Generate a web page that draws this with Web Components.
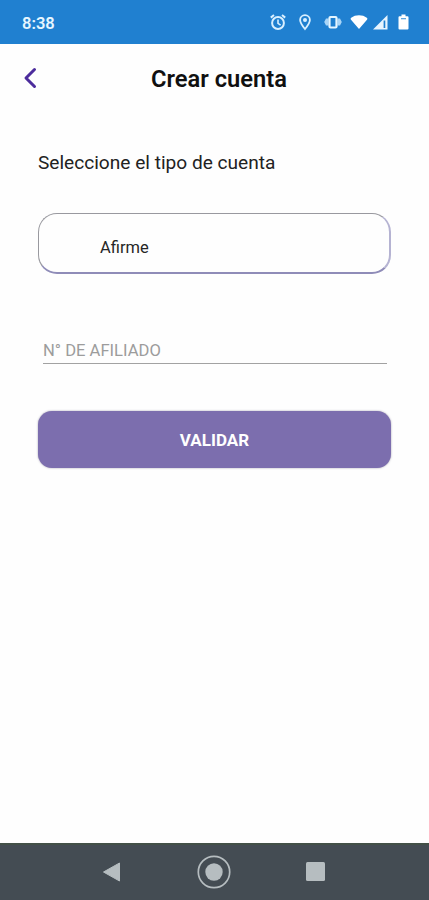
<!DOCTYPE html>
<html lang="es">
<head>
<meta charset="UTF-8">
<meta name="viewport" content="width=device-width, initial-scale=1">
<title>Crear cuenta</title>
<style>
  html, body {
    margin: 0;
    height: 100%;
    background: #fefefe;
    font-family: Roboto, "Liberation Sans", sans-serif;
  }
</style>
</head>
<body>
<account-screen></account-screen>

<script>
// Android status bar: clock on the left, system icons on the right
class StatusBar extends HTMLElement {
  constructor() {
    super();
    this.attachShadow({ mode: 'open' });
    this.shadowRoot.innerHTML = `
      <style>
        :host {
          display: flex;
          align-items: center;
          justify-content: space-between;
          box-sizing: border-box;
          height: 44px;
          padding: 0 20px 0 22px;
          background: #2080d0;
          color: #e6f6ff;
          font-size: 16.5px;
          font-weight: 600;
        }
        span { padding-top: 2px; }
        .icons { display: flex; align-items: center; }
        svg { display: block; }
        .pin { margin-left: 13px; }
        .vibrate { margin-left: 13px; }
        .wifi { margin-left: 8px; }
        .signal { margin-left: 5px; }
        .battery { margin-left: 10px; }
      </style>
      <span><slot></slot></span>
      <div class="icons">
        <svg width="16" height="18" viewBox="0 0 16 18" fill="none" stroke="#d9efff" stroke-width="2">
          <circle cx="8" cy="10" r="5.900"/>
          <path d="M8 6.600v3.800l2.600 1.700" stroke-width="1.600"/>
          <path d="M.8 4.600 4 2M15.200 4.600 12 2"/>
        </svg>
        <svg class="pin" width="12" height="18" viewBox="0 0 12 18" fill="none" stroke="#d9efff" stroke-width="1.800">
          <path d="M6 16C3.200 12.600 1.100 9.800 1.100 7a4.900 4.900 0 0 1 9.800 0c0 2.800-2.100 5.600-4.900 9z"/>
          <circle cx="6" cy="7" r="2" fill="#d9efff" stroke="none"/>
        </svg>
        <svg class="vibrate" width="18" height="18" viewBox="0 0 18 18">
          <path d="M.2 9 2 5.500h2.500v7H2zM17.800 9 16 5.500h-2.500v7H16z" fill="#a9d5f7"/>
          <rect x="5.500" y="4" width="7" height="10.500" rx="1" fill="none" stroke="#e6f6ff" stroke-width="2.200"/>
        </svg>
        <svg class="wifi" width="18" height="18" viewBox="0 0 18 18" fill="#fff">
          <path d="M9 16 .8 6.400Q.2 5.400 1.200 4.700C3.500 3 6 2.200 9 2.200s5.500.8 7.800 2.500q1 .7.4 1.700z"/>
        </svg>
        <svg class="signal" width="15" height="18" viewBox="0 0 15 18">
          <path d="M0 16.500 14.500 2v14.500z" fill="#e8f5ff"/>
          <path d="M10.600 7.500V15h1.700V7.500z" fill="#2080d0"/>
        </svg>
        <svg class="battery" width="11" height="18" viewBox="0 0 11 18" fill="#fff">
          <path d="M3.500 1.500h4v1.700h2q1 0 1 1v11.300q0 1-1 1h-8q-1 0-1-1V4.200q0-1 1-1h2z"/>
          <path d="M3 5h5v1.300H3z" fill="#5fa6df"/>
        </svg>
      </div>
    `;
  }
}

// Title bar with the back chevron
class AppHeader extends HTMLElement {
  constructor() {
    super();
    this.attachShadow({ mode: 'open' });
    this.shadowRoot.innerHTML = `
      <style>
        :host {
          display: grid;
          grid-template-columns: 60px 1fr 60px;
          align-items: center;
          height: 70px;
        }
        button {
          justify-self: start;
          margin: 0 0 3px 22px;
          padding: 0;
          border: 0;
          background: none;
        }
        svg { display: block; }
        h1 {
          margin: 0;
          padding-left: 9px;
          text-align: center;
          font-size: 23.7px;
          line-height: 28px;
          font-weight: 600;
          color: #101010;
        }
      </style>
      <button aria-label="Volver">
        <svg width="16" height="22" viewBox="0 0 16 22" fill="none" stroke="#4c2c9c" stroke-width="3" stroke-linecap="round" stroke-linejoin="round">
          <path d="M12.500 2.500 4 11l8.500 8.500"/>
        </svg>
      </button>
      <h1><slot></slot></h1>
    `;
  }
}

// Outlined box holding the selected account type
class AccountSelect extends HTMLElement {
  constructor() {
    super();
    this.attachShadow({ mode: 'open' });
    this.shadowRoot.innerHTML = `
      <style>
        :host {
          display: flex;
          align-items: center;
          box-sizing: border-box;
          height: 61px;
          padding: 9px 0 0 61px;
          border: 1px solid #99999f;
          border-right: 2px solid #b5b3d2;
          border-bottom: 2px solid #8f8cb8;
          border-radius: 19px;
          font-size: 16.5px;
          color: #262626;
        }
      </style>
      <span><slot></slot></span>
    `;
  }
}

// Underlined input, material style
class LineField extends HTMLElement {
  constructor() {
    super();
    this.attachShadow({ mode: 'open' });
    this.shadowRoot.innerHTML = `
      <style>
        :host {
          display: flex;
          align-items: center;
          box-sizing: border-box;
          height: 28px;
          padding-top: 1px;
          border-bottom: 1px solid #a2a2a2;
          font-size: 16.6px;
          color: #9c9c9c;
        }
      </style>
      <span><slot></slot></span>
    `;
  }
}

class PrimaryButton extends HTMLElement {
  constructor() {
    super();
    this.attachShadow({ mode: 'open' });
    this.shadowRoot.innerHTML = `
      <style>
        :host { display: block; }
        button {
          display: block;
          width: 100%;
          height: 57px;
          padding: 1px 0 0;
          border: 0;
          border-radius: 14px;
          background: #7c6eae;
          box-shadow: 0 0 2px rgba(60, 50, 90, 0.5);
          color: #fff;
          font: 700 17px Roboto, "Liberation Sans", sans-serif;
        }
      </style>
      <button><slot></slot></button>
    `;
  }
}

// System navigation: back, home, recents
class NavBar extends HTMLElement {
  constructor() {
    super();
    this.attachShadow({ mode: 'open' });
    this.shadowRoot.innerHTML = `
      <style>
        :host {
          display: flex;
          align-items: center;
          justify-content: center;
          box-sizing: border-box;
          height: 57px;
          padding: 0 2px 2px 0;
          border-top: 2px solid #435047;
          background: #444c53;
        }
        svg { display: block; }
        .home { margin: 0 75px 0 76px; }
      </style>
      <svg width="19" height="20" viewBox="0 0 19 20">
        <path d="M1.500 10 17.500 1v18z" fill="#b6bdc0" stroke="#b6bdc0" stroke-linejoin="round"/>
      </svg>
      <svg class="home" width="34" height="34" viewBox="0 0 34 34">
        <circle cx="17" cy="17" r="15.700" fill="none" stroke="#b6bdc0" stroke-width="1.700"/>
        <circle cx="17" cy="17" r="8.700" fill="#b6bdc0"/>
      </svg>
      <svg width="19" height="19" viewBox="0 0 19 19">
        <rect width="19" height="19" rx="1.500" fill="#b6bdc0"/>
      </svg>
    `;
  }
}

class AccountScreen extends HTMLElement {
  constructor() {
    super();
    this.attachShadow({ mode: 'open' });
    this.shadowRoot.innerHTML = `
      <style>
        :host {
          display: flex;
          flex-direction: column;
          height: 100vh;
          overflow: hidden;
        }
        main {
          flex: 1;
          padding: 35px 38px 0;
        }
        h2 {
          margin: 0;
          font-size: 19.1px;
          line-height: 27px;
          font-weight: 400;
          color: #222;
        }
        account-select { margin-top: 37px; }
        line-field { margin: 62px 4px 0 5px; }
        primary-button { margin-top: 47px; }
      </style>
      <status-bar>8:38</status-bar>
      <app-header>Crear cuenta</app-header>
      <main>
        <h2>Seleccione el tipo de cuenta</h2>
        <account-select>Afirme</account-select>
        <line-field>N° DE AFILIADO</line-field>
        <primary-button>VALIDAR</primary-button>
      </main>
      <nav-bar></nav-bar>
    `;
  }
}

customElements.define('status-bar', StatusBar);
customElements.define('app-header', AppHeader);
customElements.define('account-select', AccountSelect);
customElements.define('line-field', LineField);
customElements.define('primary-button', PrimaryButton);
customElements.define('nav-bar', NavBar);
customElements.define('account-screen', AccountScreen);
</script>
</body>
</html>
